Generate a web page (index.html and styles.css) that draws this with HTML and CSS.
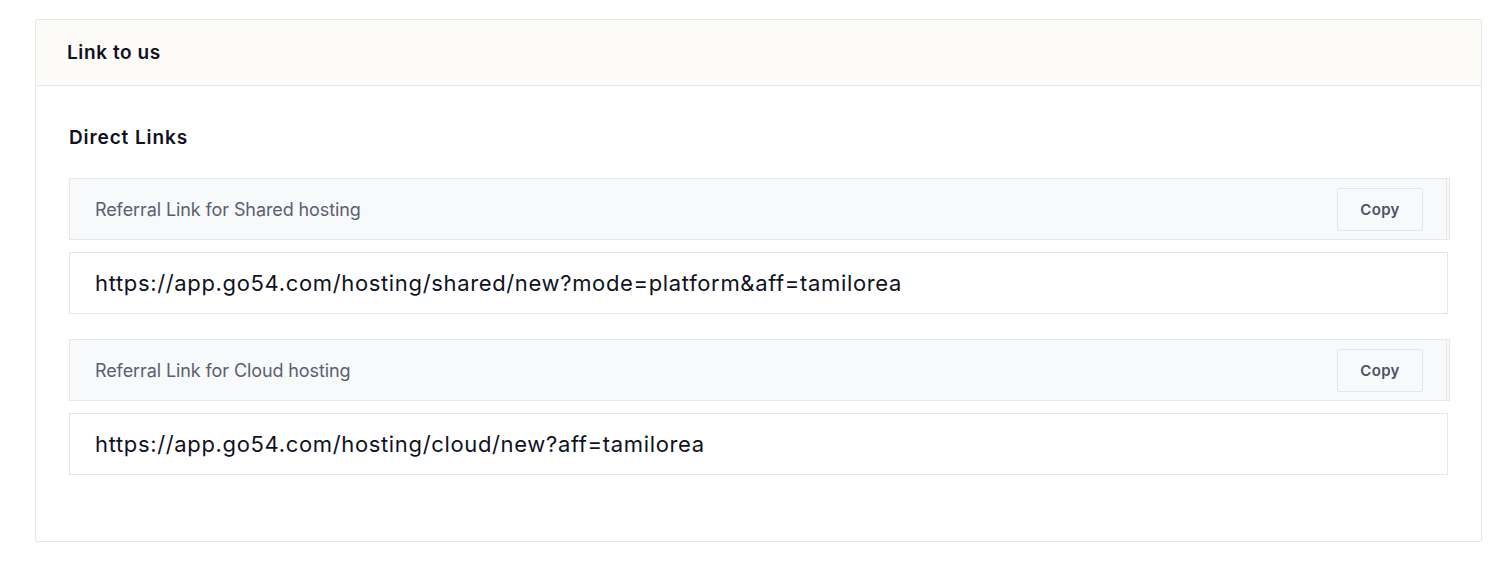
FILE: index.html
```html
<!DOCTYPE html>
<html>
<head>
<meta charset="utf-8">
<link rel="stylesheet" href="styles.css">
</head>
<body>
<div class="card">
  <div class="card-header">Link to us</div>
  <div class="card-body">
    <h2 class="section-title">Direct Links</h2>
    <div class="link-group">
      <div class="label-row">
        <span class="label">Referral Link for Shared hosting</span>
        <button class="copy-btn">Copy</button>
      </div>
      <div class="url-box">https://app.go54.com/hosting/shared/new?mode=platform&amp;aff=tamilorea</div>
    </div>
    <div class="link-group">
      <div class="label-row">
        <span class="label">Referral Link for Cloud hosting</span>
        <button class="copy-btn">Copy</button>
      </div>
      <div class="url-box">https://app.go54.com/hosting/cloud/new?aff=tamilorea</div>
    </div>
  </div>
</div>
</body>
</html>
```

FILE: styles.css
```css
* { box-sizing: border-box; }
body {
  margin: 0;
  background: #ffffff;
  font-family: Inter, "Noto Sans", sans-serif;
  color: #0f1222;
}
.card {
  margin: 19px 25px 0 35px;
  width: 1447px;
  height: 523px;
  border: 1px solid #e6e6e8;
  border-radius: 2px;
}
.card-header {
  height: 66px;
  background: #fdfbf7;
  border-bottom: 1px solid #e6e6e8;
  padding: 0 31px;
  display: flex;
  align-items: center;
  font-size: 19px;
  font-weight: 600;
  letter-spacing: 0.6px;
}
.card-body {
  padding: 37px 32px 0 33px;
}
.section-title {
  margin: 0 0 25px;
  font-size: 19px;
  font-weight: 600;
  line-height: 30px;
  letter-spacing: 0.9px;
}
.link-group {
  display: flex;
  flex-direction: column;
  gap: 12px;
  margin-bottom: 25px;
}
.label-row {
  height: 62px;
  width: 1381px;
  background: #f8f9fb;
  border: 1px solid #e6e7eb;
  box-shadow: inset -2px 0 0 #f8f9fb, inset -3px 0 0 #e6e7eb;
  display: flex;
  align-items: center;
  justify-content: space-between;
  padding: 0 26px 0 25px;
}
.label {
  font-size: 18px;
  color: #5a5f70;
  letter-spacing: -0.1px;
}
.copy-btn {
  width: 86px;
  height: 43px;
  background: #f8f9fb;
  border: 1px solid #e3e5ea;
  border-radius: 2px;
  font-family: Inter, "Noto Sans", sans-serif;
  font-size: 15px;
  font-weight: 600;
  color: #4c5263;
  letter-spacing: 0.3px;
}
.url-box {
  height: 62px;
  width: 1379px;
  border: 1px solid #e6e7eb;
  display: flex;
  align-items: center;
  padding: 0 25px;
  font-size: 22px;
  letter-spacing: 0.65px;
  color: #0f1222;
}
```
